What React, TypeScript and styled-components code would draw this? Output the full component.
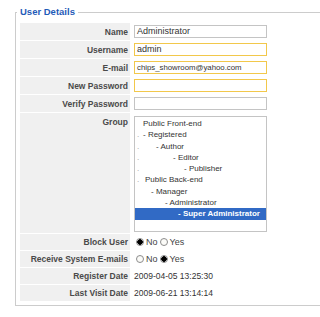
import styled, { createGlobalStyle } from 'styled-components';

const GlobalStyle = createGlobalStyle`
  html, body {
    margin: 0;
    padding: 0;
    background: #ffffff;
    overflow: hidden;
  }
  body {
    font-family: 'Liberation Sans', Arial, sans-serif;
  }
`;

const groups = [
  { text: 'Public Front-end', dot: false, indent: 8 },
  { text: '- Registered', dot: true, indent: 8 },
  { text: '- Author', dot: true, indent: 21 },
  { text: '- Editor', dot: true, indent: 38 },
  { text: '- Publisher', dot: true, indent: 49 },
  { text: 'Public Back-end', dot: true, indent: 10 },
  { text: '- Manager', dot: false, indent: 16 },
  { text: '- Administrator', dot: false, indent: 30 },
  { text: '- Super Administrator', dot: false, indent: 43, selected: true },
];

export default function App() {
  return (
    <>
      <GlobalStyle />
      <Fieldset>
        <Legend>User Details</Legend>
        <Grid>
          <Key>Name</Key>
          <Value>
            <TextInput $size={9}>Administrator</TextInput>
          </Value>

          <Key>Username</Key>
          <Value>
            <TextInput $size={9} $highlight>admin</TextInput>
          </Value>

          <Key>E-mail</Key>
          <Value>
            <TextInput $size={7.8} $highlight>chips_showroom@yahoo.com</TextInput>
          </Value>

          <Key>New Password</Key>
          <Value>
            <TextInput $size={9} $highlight />
          </Value>

          <Key>Verify Password</Key>
          <Value>
            <TextInput $size={9} />
          </Value>

          <Key $top>Group</Key>
          <Value>
            <ListBox>
              {groups.map((g) => (
                <Option key={g.text} $selected={g.selected}>
                  <Lead $width={g.indent}>{g.dot ? '.' : ''}</Lead>
                  <span>{g.text}</span>
                </Option>
              ))}
            </ListBox>
          </Value>

          <Key $short>Block User</Key>
          <Value>
            <RadioGroup>
              <Radio $checked />
              <RadioLabel>No</RadioLabel>
              <Radio />
              <RadioLabel>Yes</RadioLabel>
            </RadioGroup>
          </Value>

          <Key $short>Receive System E-mails</Key>
          <Value>
            <RadioGroup>
              <Radio />
              <RadioLabel>No</RadioLabel>
              <Radio $checked />
              <RadioLabel>Yes</RadioLabel>
            </RadioGroup>
          </Value>

          <Key $short>Register Date</Key>
          <Value>
            <DateText>2009-04-05 13:25:30</DateText>
          </Value>

          <Key $short>Last Visit Date</Key>
          <Value>
            <DateText>2009-06-21 13:14:14</DateText>
          </Value>
        </Grid>
      </Fieldset>
    </>
  );
}

const Fieldset = styled.fieldset`
  box-sizing: border-box;
  width: 306px;
  margin: 6px 0 0 15px;
  padding: 5px 4px 4px 4px;
  border: 1px solid #cccccc;
  min-inline-size: 0;
`;

const Legend = styled.legend`
  padding: 0 3px;
  margin-left: -3px;
  font-size: 9.5px;
  line-height: 12px;
  font-weight: 700;
  color: #1f5bb8;
`;

const Grid = styled.div`
  display: grid;
  grid-template-columns: 110px 133px;
  column-gap: 4px;
  row-gap: 1px;
`;

const Key = styled.div<{ $top?: boolean; $short?: boolean }>`
  display: flex;
  justify-content: flex-end;
  align-items: ${(p) => (p.$top ? 'flex-start' : 'center')};
  min-height: ${(p) => (p.$short ? '16px' : '17px')};
  padding: ${(p) => (p.$top ? '4px 2px 0 0' : '0 2px 0 0')};
  box-sizing: border-box;
  background: #f0f0f0;
  color: #4a4a4a;
  font-size: 8.5px;
  font-weight: 700;
  white-space: nowrap;
`;

const Value = styled.div`
  display: flex;
  align-items: center;
`;

const TextInput = styled.div<{ $highlight?: boolean; $size: number }>`
  box-sizing: border-box;
  width: 133px;
  height: 13px;
  padding: 0 2px;
  border: 1px solid ${(p) => (p.$highlight ? '#f2c84b' : '#c4c4c4')};
  background: #ffffff;
  color: #333333;
  font-size: ${(p) => p.$size}px;
  line-height: 11px;
  white-space: nowrap;
  overflow: hidden;
`;

const ListBox = styled.div`
  box-sizing: border-box;
  width: 133px;
  height: 116px;
  margin: 3px 0 1px 0;
  padding-top: 1px;
  border: 1px solid #c4c4c4;
  background: #ffffff;
`;

const Option = styled.div<{ $selected?: boolean }>`
  display: flex;
  height: 11.3px;
  line-height: 11.3px;
  font-size: 8px;
  white-space: nowrap;
  color: ${(p) => (p.$selected ? '#ffffff' : '#333333')};
  background: ${(p) => (p.$selected ? '#316ac5' : 'transparent')};
  font-weight: ${(p) => (p.$selected ? 600 : 400)};
`;

const Lead = styled.span<{ $width: number }>`
  flex: none;
  width: ${(p) => p.$width}px;
  padding-left: 2px;
  box-sizing: border-box;
  color: #999999;
`;

const RadioGroup = styled.div`
  display: flex;
  align-items: center;
  padding-left: 2px;
`;

const Radio = styled.span<{ $checked?: boolean }>`
  box-sizing: border-box;
  width: 8px;
  height: 8px;
  border-radius: 50%;
  border: 1px solid #8c8c8c;
  background: ${(p) =>
    p.$checked ? 'radial-gradient(circle, #000000 0 2.6px, #ffffff 3px)' : '#fbfbf8'};
`;

const RadioLabel = styled.span`
  margin: 0 2px 0 2px;
  font-size: 9px;
  color: #444444;
`;

const DateText = styled.span`
  font-size: 8.5px;
  color: #333333;
`;
